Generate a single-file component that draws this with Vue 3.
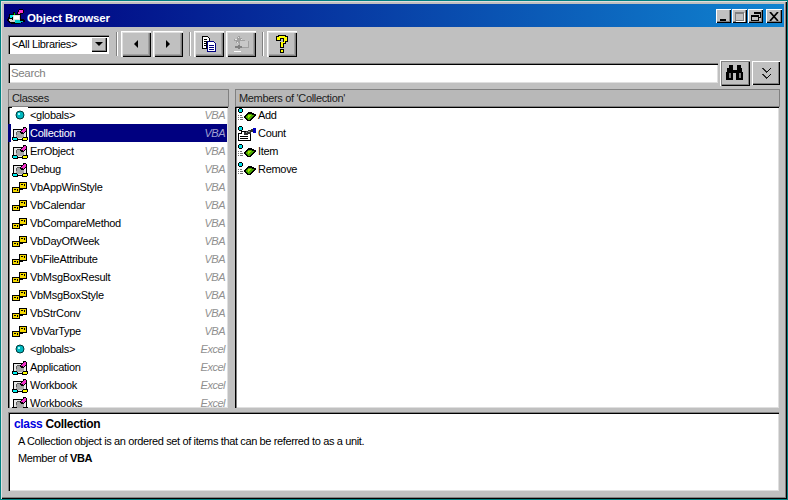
<script setup>
const classes = [
  ['g', '<globals>', 'VBA'], ['c', 'Collection', 'VBA'], ['c', 'ErrObject', 'VBA'], ['c', 'Debug', 'VBA'],
  ['e', 'VbAppWinStyle', 'VBA'], ['e', 'VbCalendar', 'VBA'], ['e', 'VbCompareMethod', 'VBA'], ['e', 'VbDayOfWeek', 'VBA'],
  ['e', 'VbFileAttribute', 'VBA'], ['e', 'VbMsgBoxResult', 'VBA'], ['e', 'VbMsgBoxStyle', 'VBA'], ['e', 'VbStrConv', 'VBA'],
  ['e', 'VbVarType', 'VBA'], ['g', '<globals>', 'Excel'], ['c', 'Application', 'Excel'], ['c', 'Workbook', 'Excel'], ['c', 'Workbooks', 'Excel']
]
const members = [['m', 'Add'], ['p', 'Count'], ['m', 'Item'], ['m', 'Remove']]
</script>

<template>
  <div class="desktop">
    <svg class="defs" width="0" height="0">
      <defs>
        <symbol id="i-g" viewBox="0 0 16 16"><circle cx="8" cy="8" r="4" fill="#00b8c0" stroke="#003838"/><rect x="6" y="6" width="2" height="2" fill="#a0ffff"/></symbol>
        <symbol id="i-c" viewBox="0 0 16 16" shape-rendering="crispEdges">
          <path d="M1.500 4.500h13v10h-13z" fill="#e8e8e8" stroke="#000"/>
          <path d="M5 6h6v1h1v5h-1v1H5v-1H4V7h1z" fill="#a8a8a8"/>
          <path d="M5 6h4v1H5zM4 7h1v3H4z" fill="#606060"/>
          <path d="M8 6h1V5h1V4h1V2h3v1h1v3h-1v1h-1v1h-1v1H9V8H8z" fill="#000"/>
          <path d="M9 6h1V5h1V4h1V3h2v3h-1v1h-1v1h-1V7H9z" fill="#f030c8"/>
          <path d="M0 12h5v1h1v3H1v-1H0z" fill="#000"/>
          <path d="M1 13h4v2H1z" fill="#00f0f0"/>
          <path d="M10 13h1v-1h5v3h-1v1h-5z" fill="#000"/>
          <path d="M11 13h4v2h-4z" fill="#ffff00"/>
        </symbol>
        <symbol id="i-t" viewBox="0 0 18 16" shape-rendering="crispEdges">
          <path d="M0 10h1V8h1V5h4V3h2v2h2V3h1V1h1V0h4v1h1v3h-1v1h-2v5h3v1h1v2h-3v1h-2v1H4v-1H2v-1H1v-1H0z" fill="#000"/>
          <path d="M3 6h3v2H5v1H3z" fill="#00e8e8"/>
          <path d="M6 6h7v5H6z" fill="#e0e0e0"/>
          <path d="M7 7h5v3H7z" fill="#fff"/>
          <path d="M2 10h3v1h3v2H3v-1H2z" fill="#d0d0d0"/>
          <path d="M8 11h5v1h3v1h-2v1H8z" fill="#00c8c8"/>
          <path d="M12 1h4v3h-3v1h-2V3h1z" fill="#f030c8"/>
          <path d="M7 4h1v2H7z" fill="#00c000"/>
        </symbol>
        <symbol id="i-e" viewBox="0 0 16 16" shape-rendering="crispEdges">
          <path d="M7.500 3.500h7v6h-7z" fill="#f4d800" stroke="#000"/>
          <path d="M9 5h2v1H9zM12 5h1v2h-1z" fill="#000"/>
          <path d="M0.500 8.500h7v5h-7z" fill="#f4d800" stroke="#000"/>
          <path d="M2 10h2v1H2zM5 10h1v2H5z" fill="#000"/>
          <path d="M8 10h3v1H8z" fill="#000"/>
        </symbol>
        <symbol id="i-m" viewBox="0 0 20 16" shape-rendering="crispEdges">
          <path d="M2 1h3v1h1v3H5v1H2V5H1V2h1z" fill="#000"/>
          <path d="M2 2h3v3H2z" fill="#00e0e8"/>
          <path d="M1 8h1M3 8h2M1 10h1M3 10h3M1 12h1M3 12h3" stroke="#707070"/>
          <path d="M7 9h1V8h1V7h1V6h1V5h4v1h2v1h2v2h-1v1h-1v1h-1v1h-1v1h-1v1h-4v-1H9v-1H8v-1H7z" fill="#000"/>
          <path d="M9 9h1V8h1V7h4v1h2v1h-1v1h-1v1h-1v1h-1v1h-2v-1h-1v-1H9z" fill="#48a800"/>
          <path d="M11 8h3v1h-1v1h-1v1h-1z" fill="#a8e000"/>
        </symbol>
        <symbol id="i-p" viewBox="0 0 20 16" shape-rendering="crispEdges">
          <path d="M2 1h3v1h1v3H5v1H2V5H1V2h1z" fill="#000"/>
          <path d="M2 2h3v3H2z" fill="#00e0e8"/>
          <path d="M1.500 8.500h3v-2h9v9h-12z" fill="#fff" stroke="#000"/>
          <path d="M3 11h8M3 13h8" stroke="#000"/>
          <path d="M7 7h2V6h2V5h3V4h2v3h-2v2h-3v1H7z" fill="#303030"/>
          <path d="M9 7h1v1H9zM11 6h2v1h-2z" fill="#a0a0a0"/>
          <rect x="16" y="3" width="3" height="5" fill="#0000c0"/>
        </symbol>
      </defs>
    </svg>

    <div class="window">
      <header class="title">
        <svg class="ticon" width="18" height="16"><use href="#i-t" /></svg>
        <span class="title-text">Object Browser</span>
        <div class="caps">
          <button class="cap"><span class="min"></span></button>
          <button class="cap dis"><span class="max"></span></button>
          <button class="cap"><svg width="10" height="9" shape-rendering="crispEdges"><path d="M3 .5h6.500v5H7M3 1.500h6M.5 3.500h6.500v5H.5zM.5 4.500h6.500" fill="none" stroke="#000"/></svg></button>
          <button class="cap close"><svg width="10" height="9"><path d="M1 0l8 9M9 0l-8 9" stroke="#000" stroke-width="1.700"/></svg></button>
        </div>
      </header>

      <div class="toolbar">
        <div class="combo">
          <span class="combo-text">&lt;All Libraries&gt;</span>
          <span class="combo-btn"><i class="tri-d"></i></span>
        </div>
        <i class="sep"></i>
        <button class="tb first"><i class="tri-l"></i></button>
        <button class="tb"><i class="tri-r"></i></button>
        <i class="sep"></i>
        <button class="tb">
          <svg width="18" height="18" shape-rendering="crispEdges"><path d="M2.500 1.500h5l2 2v3h-3v7h-4z" fill="#fff" stroke="#000"/><path d="M4 4h3M4 6h2M4 8h2M4 10h2" stroke="#000"/><path d="M7.500 6.500h6l2 2v8h-8z" fill="#fff" stroke="#000080"/><path d="M9 10h5M9 12h5M9 14h5" stroke="#000080"/></svg>
        </button>
        <button class="tb disabled">
          <svg width="20" height="20" shape-rendering="crispEdges"><path d="M7 2h2v2h2v2h3v1h4v7H8V9H5V7H3V5h3V3h1z" fill="#a0a0a0"/><path d="M9 7h8v6H9z" fill="#c8c8c8"/><path d="M4 13h7M8 11v4" stroke="#808080" stroke-width="2"/><path d="M3 17h7" stroke="#fff"/><path d="M4 5h2M7 3h1M10 5h1M6 8h1" stroke="#e8e8e8"/></svg>
        </button>
        <i class="sep"></i>
        <button class="tb">
          <svg width="14" height="20" shape-rendering="crispEdges"><path d="M3 1h8v1h2v6h-2v2H9v4H5V8h3V5H6v2H1V2h2zM5 15h4v4H5z" fill="#000"/><path d="M4 2h6v1h2v4h-2v2H8v4H6V8h3V4H5v2H2V3h2zM6 16h2v2H6z" fill="#ffff00"/></svg>
        </button>
      </div>

      <div class="searchbar">
        <div class="search">Search</div>
        <button class="find">
          <svg width="18" height="16" shape-rendering="crispEdges"><path d="M3 0h4v5h4V0h4v3h1v4h1v8h-7V8H7v7H0V7h1V3h2z" fill="#000"/><path d="M3 8h2v5H3zM13 8h2v5h-2z" fill="#808080"/></svg>
        </button>
        <button class="expand">
          <svg width="11" height="14" shape-rendering="crispEdges"><path d="M1 2h1v1h1v1h1v1h1v1h1V5h1V4h1V3h1V2h1M1 8h1v1h1v1h1v1h1v1h1v-1h1v-1h1V9h1V8h1" fill="none" stroke="#000" stroke-width=".8"/></svg>
        </button>
      </div>

      <div class="panes">
        <section class="pane left">
          <div class="head">Classes</div>
          <div class="list">
            <div v-for="(r, i) in classes" :key="i" class="row" :class="{ sel: r[1] === 'Collection' }">
              <svg class="ic" width="16" height="16"><use :href="'#i-' + r[0]" /></svg>
              <span class="name">{{ r[1] }}</span>
              <span class="lib">{{ r[2] }}</span>
            </div>
          </div>
        </section>
        <section class="pane right">
          <div class="head">Members of 'Collection'</div>
          <div class="list">
            <div v-for="m in members" :key="m[1]" class="row mem">
              <svg width="20" height="16"><use :href="'#i-' + m[0]" /></svg>
              <span class="name">{{ m[1] }}</span>
            </div>
          </div>
        </section>
      </div>

      <div class="desc">
        <div class="d1"><b class="kw">class</b> <b>Collection</b></div>
        <div class="d2">A Collection object is an ordered set of items that can be referred to as a unit.</div>
        <div class="d3">Member of <b>VBA</b></div>
      </div>
    </div>
  </div>
</template>

<style scoped>
.desktop { width: 788px; height: 500px; background: #008080; padding: 1px; box-sizing: border-box; font: 11px "Liberation Sans", Arial, sans-serif; color: #000; overflow: hidden; }
.defs { position: absolute; }
.window { height: 498px; width: 786px; box-sizing: border-box; background: #c0c0c0; padding: 3px; display: flex; flex-direction: column; box-shadow: inset 1px 1px 0 #dfdfdf, inset -1px -1px 0 #000, inset -2px -2px 0 #808080; }
.title { height: 23px; flex: none; display: flex; align-items: center; background: linear-gradient(90deg, #000080, #1084d0); padding-left: 3px; color: #fff; }
.ticon { margin-right: 2px; margin-top: 3px; }
.title-text { font-weight: bold; font-size: 11.500px; letter-spacing: -.15px; margin-top: 5px; }
.caps { margin-left: auto; display: flex; gap: 1px; margin-right: 2px; margin-top: 1px; }
.cap { width: 15px; height: 14px; padding: 0; border: 0; background: #c0c0c0; display: flex; align-items: center; justify-content: center; box-shadow: inset 1px 1px 0 #fff, inset -1px -1px 0 #000, inset -2px -2px 0 #808080; }
.close { width: 16px; margin-left: 2px; }
.min { width: 6px; height: 2px; background: #000; margin-top: 7px; margin-right: 2px; }
.max { width: 9px; height: 9px; box-sizing: border-box; border: 1px solid #808080; border-top-width: 2px; box-shadow: 1px 1px 0 #fff; }
.toolbar { height: 26px; margin-top: 4px; flex: none; display: flex; align-items: center; padding-left: 4px; }
.combo { width: 101px; height: 19px; box-sizing: border-box; background: #fff; display: flex; align-items: center; padding: 2px; box-shadow: inset 1px 1px 0 #808080, inset 2px 2px 0 #000, inset -1px -1px 0 #fff; position: relative; }
.combo-text { flex: 1; padding-left: 2px; color: #000; font-size: 11px; letter-spacing: -.35px; }
.combo-btn { width: 16px; height: 15px; background: #c0c0c0; display: flex; align-items: center; justify-content: center; box-shadow: inset 1px 1px 0 #fff, inset -1px -1px 0 #000, inset -2px -2px 0 #808080; }
.tri-d { width: 0; height: 0; border: 4px solid transparent; border-top-color: #000; border-bottom-width: 0; }
.tri-l { width: 0; height: 0; border: 4px solid transparent; border-right-color: #000; border-left-width: 0; }
.tri-r { width: 0; height: 0; border: 4px solid transparent; border-left-color: #000; border-right-width: 0; }
.sep { width: 2px; height: 24px; background: linear-gradient(90deg, #808080 50%, #fff 50%); margin: 0 3px 0 7px; }
.tb { width: 30px; height: 26px; padding: 0; border: 0; margin-right: 2px; background: #c0c0c0; display: flex; align-items: center; justify-content: center; box-shadow: inset 1px 1px 0 #fff, inset 2px 2px 0 #dfdfdf, inset -1px -1px 0 #000, inset -2px -2px 0 #808080, inset -3px -3px 0 #a0a0a0; }
.tb + .sep { margin-left: 4px; }
.searchbar { height: 26px; margin-top: 3px; flex: none; display: flex; align-items: center; padding-left: 4px; }
.search { width: 710px; height: 20px; line-height: 20px; box-sizing: border-box; padding-left: 3px; background: #fff; color: #808080; font-size: 11.500px; letter-spacing: -.35px; box-shadow: inset 1px 1px 0 #808080, inset 2px 2px 0 #000, inset -1px -1px 0 #dfdfdf; }
.find { width: 30px; height: 26px; margin-left: 2px; padding: 0; border: 0; background: #c0c0c0; display: flex; align-items: center; justify-content: center; box-shadow: inset 1px 1px 0 #fff, inset 2px 2px 0 #808080, inset -1px -1px 0 #000, inset -2px -2px 0 #808080; }
.expand { width: 28px; height: 24px; margin-left: 2px; padding: 0; border: 0; background: #c0c0c0; display: flex; align-items: center; justify-content: center; box-shadow: inset 1px 1px 0 #fff, inset -1px -1px 0 #000, inset -2px -2px 0 #808080; }
.panes { flex: none; height: 319px; margin-top: 3px; padding-left: 4px; display: flex; gap: 6px; }
.pane { display: flex; flex-direction: column; height: 100%; overflow: hidden; }
.left { width: 221px; }
.right { width: 545px; }
.head { height: 18px; line-height: 18px; flex: none; box-sizing: border-box; padding-left: 4px; color: #202020; background: #b8b8b8; letter-spacing: -.33px; box-shadow: inset 1px 1px 0 #808080, inset -1px -1px 0 #808080; }
.list { flex: 1; background: #fff; overflow: hidden; padding: 0; margin-right: 1px; box-shadow: inset 1px 1px 0 #000, inset 2px 1px 0 #808080, inset -1px -1px 0 #dfdfdf; }
.row { height: 18px; display: flex; align-items: center; padding-left: 4px; margin-right: 1px; }
.row:first-child { margin-top: -1px; }
.ic { flex: none; margin-right: 2px; background: #fff; }
.name { flex: 1; white-space: nowrap; letter-spacing: -.3px; }
.lib { font-style: italic; color: #909090; padding-right: 2px; letter-spacing: -.5px; }
.sel { background: #000080; color: #fff; }
.sel .ic { outline: 1px solid #fff; }
.sel .lib { color: #a0a0d0; }
.mem { padding-left: 2px; }
.mem svg { flex: none; margin-right: 1px; }
.desc { flex: none; height: 79px; margin: 4px 4px 0 4px; width: 771px; box-sizing: border-box; padding: 5px 6px 4px; background: #fff; box-shadow: inset 1px 1px 0 #808080, inset 2px 2px 0 #000, inset -1px -1px 0 #dfdfdf; }
.d1 { font-size: 12px; height: 16px; line-height: 15px; letter-spacing: -.32px; }
.kw { color: #0000e0; }
.d2, .d3 { height: 17px; line-height: 17px; padding-left: 4px; letter-spacing: -.37px; }
</style>
